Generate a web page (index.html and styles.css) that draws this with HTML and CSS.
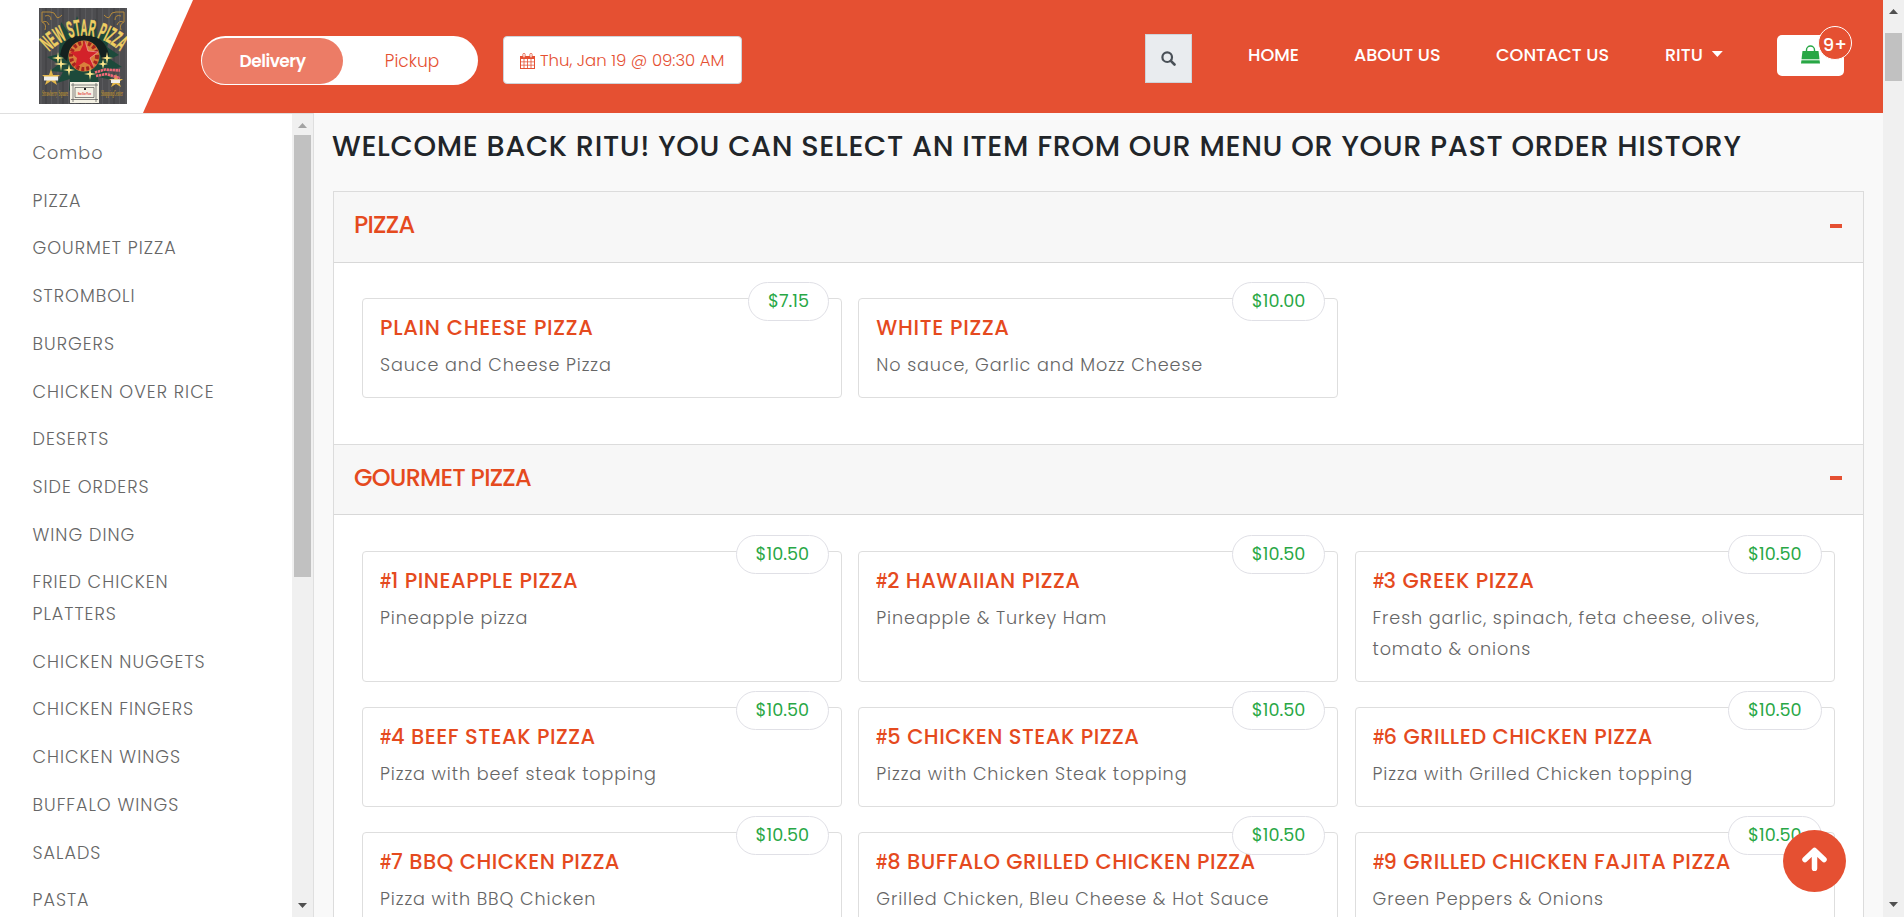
FILE: index.html
```html
<!DOCTYPE html>
<html lang="en">
<head>
<meta charset="utf-8">
<title>New Star Pizza</title>
<link rel="stylesheet" href="styles.css">
</head>
<body>
<div class="app">
  <div class="page">
    <header class="header">
      <div class="brand">
        <svg class="logo" viewBox="0 0 88 96" preserveAspectRatio="none">
          <defs>
            <pattern id="wood" width="17" height="96" patternUnits="userSpaceOnUse">
              <rect width="17" height="96" fill="#4d4d50"/>
              <rect x="1" width="2" height="96" fill="#565659"/>
              <rect x="6" width="2" height="96" fill="#454548"/>
              <rect x="12" width="1" height="96" fill="#5a5a5d"/>
            </pattern>
            <path id="arc" d="M10 44Q45 10 84 46"/>
          </defs>
          <rect width="88" height="96" fill="url(#wood)"/>
          <g fill="none" stroke="#b58a3c" stroke-width="1">
            <path d="M3 4h8q5 0 6 4t6-1M3 4v10q5 2 3 8M6 8q6-2 6 4M4 14q4-2 6 3"/>
            <path d="M85 4h-8q-5 0-6 4t-6-1M85 4v10q-5 2-3 8M82 8q-6-2-6 4M84 14q-4-2-6 3"/>
          </g>
          <path d="M22 14l10 14 6-20 7 18 12-15 1 18 16-10-6 20 12 8-9 4 12 8-16 3 6 10-14-3 1 10-9-6-6 11-6-10-9 9 1-12-13 4 6-11-13-1 9-7-12-7 12-3z" fill="#1d4a3b"/>
          <path d="M21 47q3-20 24-20t25 20l-7 6q-3-17-18-17T28 53z" fill="#14211f"/>
          <circle cx="45" cy="48" r="15.500" fill="#d9803c"/>
          <circle cx="45" cy="48" r="13" fill="none" stroke="#a9231f" stroke-width="4" stroke-dasharray="3 2"/>
          <path d="M46 33l3 10 10 1-8 6 4 9-10-5-9 6 2-10-7-6 10-1z" fill="#d3222a"/>
          <path d="M46 33l3 10 10 1-8 6 4 9" fill="none" stroke="#f0a0a0" stroke-width=".7"/>
          <text class="logo-arc"><textPath href="#arc" textLength="80" lengthAdjust="spacingAndGlyphs">NEW STAR PIZZA</textPath></text>
          <path fill="#ffe98c" d="M19 44l1 5 5 1-5 1-1 5-1-5-5-1 5-1zM22 49l1 6 6 1-6 1-1 6-1-6-6-1 6-1zM30 56l1 5 5 1-5 1-1 5-1-5-5-1 5-1zM51 60l1 5 5 1-5 1-1 5-1-5-5-1 5-1zM68 44l1 5 5 1-5 1-1 5-1-5-5-1 5-1zM64 51l1 4 4 1-4 1-1 4-1-4-4-1 4-1z"/>
          <path d="M12 61l2 6h7l-5 4 2 6-6-4-6 4 2-6-5-4h7z" fill="#e2b64a"/>
          <path d="M77 66l2 5h5l-4 3 2 5-5-3-5 3 2-5-4-3h5z" fill="#e2b64a"/>
          <rect x="5" y="68.500" width="14" height="4" fill="#eee"/>
          <rect x="72" y="71.500" width="9" height="3.500" fill="#eee"/>
          <path d="M56 64.500l10-3 15 1M57 68l10-2 14 4" fill="none" stroke="#f06a78" stroke-width="2.600" stroke-dasharray="2.400 .6"/>
          <text class="logo-place" x="3" y="87.500" textLength="26" lengthAdjust="spacingAndGlyphs">Strawberry Square</text>
          <text class="logo-place" x="62" y="87.500" textLength="22" lengthAdjust="spacingAndGlyphs">ShoppingCenter</text>
          <rect x="31" y="74" width="29" height="21" fill="#f4f1e4"/>
          <path d="M34 75v19M57 75v19M32 77h27M32 91.500h27M36 79.500h19v10H36z" fill="none" stroke="#555" stroke-width=".7"/>
          <rect x="45" y="80" width="2" height="2" fill="#222"/>
          <text class="logo-card" x="39" y="87" textLength="13" lengthAdjust="spacingAndGlyphs">New Star Pizza</text>
        </svg>
      </div>
      <div class="bar">
        <div class="toggle"><span class="toggle-on">Delivery</span><span class="toggle-off">Pickup</span></div>
        <div class="date">
          <svg class="cal" viewBox="0 0 15 16"><path d="M0 3h15v13H0z" fill="#e55032"/><path d="M1 6h2.600v2.400H1zM4.400 6h2.700v2.400H4.400zM7.900 6h2.700v2.400H7.900zM11.400 6H14v2.400h-2.600zM1 9.200h2.600v2.600H1zM4.400 9.200h2.700v2.600H4.400zM7.900 9.200h2.700v2.600H7.900zM11.400 9.200H14v2.600h-2.600zM1 12.600h2.600V15H1zM4.400 12.600h2.700V15H4.400zM7.900 12.600h2.700V15H7.900zM11.400 12.600H14V15h-2.600z" fill="#fff"/><rect x="2.900" y=".4" width="2.200" height="4" rx="1" fill="#fff" stroke="#e55032" stroke-width=".8"/><rect x="9.900" y=".4" width="2.200" height="4" rx="1" fill="#fff" stroke="#e55032" stroke-width=".8"/></svg>
          <span class="date-text">Thu, Jan 19 @ 09:30 AM</span>
        </div>
        <button class="search"><svg viewBox="0 0 15 15" width="15" height="15"><circle cx="6.200" cy="6.200" r="4.800" fill="none" stroke="#495057" stroke-width="2.200"/><path d="M9.800 9.800l3.700 3.700" stroke="#495057" stroke-width="2.600" stroke-linecap="round"/></svg></button>
        <nav class="nav">
          <a class="nav-home">HOME</a><a class="nav-about">ABOUT US</a><a class="nav-contact">CONTACT US</a><a class="nav-user">RITU<i class="caret"></i></a>
        </nav>
        <div class="cart">
          <svg class="bag" viewBox="0 0 19 19"><path d="M1.500 6h16L19 18.500H0z" fill="#28a745"/><path d="M5.500 8V5a4 4 0 0 1 8 0v3" fill="none" stroke="#28a745" stroke-width="1.400"/><path d="M0 14.800h19" stroke="#fff" stroke-width="1"/></svg>
          <span class="badge">9+</span>
        </div>
      </div>
    </header>
    <div class="body">
      <aside class="side">
        <ul class="cats">
          <li>Combo</li><li>PIZZA</li><li>GOURMET PIZZA</li><li>STROMBOLI</li><li>BURGERS</li><li>CHICKEN OVER RICE</li><li>DESERTS</li><li>SIDE ORDERS</li><li>WING DING</li><li>FRIED CHICKEN PLATTERS</li><li>CHICKEN NUGGETS</li><li>CHICKEN FINGERS</li><li>CHICKEN WINGS</li><li>BUFFALO WINGS</li><li>SALADS</li><li>PASTA</li>
        </ul>
        <div class="scroll scroll-side"><i class="up"></i><i class="thumb"></i><i class="down"></i></div>
      </aside>
      <main class="main">
        <h1 class="welcome">WELCOME BACK RITU! YOU CAN SELECT AN ITEM FROM OUR MENU OR YOUR PAST ORDER HISTORY</h1>
        <div class="panel">
          <h2 class="sec"><span>PIZZA</span><i class="minus"></i></h2>
          <div class="grid grid-first">
            <article class="card"><b class="price">$7.15</b><h3>PLAIN CHEESE PIZZA</h3><p>Sauce and Cheese Pizza</p></article>
            <article class="card"><b class="price">$10.00</b><h3>WHITE PIZZA</h3><p>No sauce, Garlic and Mozz Cheese</p></article>
          </div>
          <h2 class="sec sec-next"><span>GOURMET PIZZA</span><i class="minus"></i></h2>
          <div class="grid grid-next">
            <article class="card"><b class="price">$10.50</b><h3><span class="hash">#</span>1 PINEAPPLE PIZZA</h3><p>Pineapple pizza</p></article>
            <article class="card"><b class="price">$10.50</b><h3><span class="hash">#</span>2 HAWAIIAN PIZZA</h3><p>Pineapple &amp; Turkey Ham</p></article>
            <article class="card"><b class="price">$10.50</b><h3><span class="hash">#</span>3 GREEK PIZZA</h3><p>Fresh garlic, spinach, feta cheese, olives, tomato &amp; onions</p></article>
            <article class="card"><b class="price">$10.50</b><h3><span class="hash">#</span>4 BEEF STEAK PIZZA</h3><p>Pizza with beef steak topping</p></article>
            <article class="card"><b class="price">$10.50</b><h3><span class="hash">#</span>5 CHICKEN STEAK PIZZA</h3><p>Pizza with Chicken Steak topping</p></article>
            <article class="card"><b class="price">$10.50</b><h3><span class="hash">#</span>6 GRILLED CHICKEN PIZZA</h3><p>Pizza with Grilled Chicken topping</p></article>
            <article class="card"><b class="price">$10.50</b><h3><span class="hash">#</span>7 BBQ CHICKEN PIZZA</h3><p>Pizza with BBQ Chicken</p></article>
            <article class="card"><b class="price">$10.50</b><h3><span class="hash">#</span>8 BUFFALO GRILLED CHICKEN PIZZA</h3><p>Grilled Chicken, Bleu Cheese &amp; Hot Sauce</p></article>
            <article class="card"><b class="price">$10.50</b><h3><span class="hash">#</span>9 GRILLED CHICKEN FAJITA PIZZA</h3><p>Green Peppers &amp; Onions</p></article>
          </div>
        </div>
      </main>
    </div>
  </div>
  <div class="scroll scroll-page"><i class="up"></i><i class="thumb"></i><i class="down"></i></div>
  <button class="top"><svg viewBox="0 0 25 24" width="25" height="24"><path d="M3 12.500L12.500 3.500l9.500 9M12.500 5v16.500" fill="none" stroke="#fff" stroke-width="5.500" stroke-linecap="round" stroke-linejoin="round"/></svg></button>
</div>
</body>
</html>
```
FILE: styles.css
```css
* { box-sizing: border-box; }
body { margin: 0; font-family: Poppins, Inter, "Open Sans", sans-serif; color: #212529; overflow: hidden; }
h1, h2, h3, p, ul { margin: 0; padding: 0; }
.app { display: flex; width: 1904px; height: 917px; overflow: hidden; position: relative; }
.page { width: 1883px; height: 917px; display: flex; flex-direction: column; }

.header { height: 113px; flex: none; display: flex; background: #fff; }
.brand { width: 143px; flex: none; padding: 8px 0 0 39px; }
.logo { width: 88px; height: 96px; display: block; }
.logo-arc { font: 700 23px "Liberation Sans Narrow", "Liberation Sans", sans-serif; fill: #efcf62; stroke: #efcf62; stroke-width: .5px; }
.logo-place { font: 700 9px "Liberation Serif", serif; fill: #b08a35; }
.logo-card { font: 700 3.500px "Liberation Sans", sans-serif; fill: #d22; }
.bar { flex: 1; display: flex; align-items: flex-start; background: #e55032; clip-path: polygon(50px 0, 100% 0, 100% 100%, 0 100%); padding-left: 58px; }

.toggle { margin-top: 36px; width: 277px; height: 49px; border-radius: 25px; background: #fff; display: flex; padding: 2px 1px 1px; font-size: 17px; line-height: 46px; }
.toggle span { flex: none; text-align: center; }
.toggle-on { width: 141px; border-radius: 23px; background: #ec7c66; color: #fff; font-weight: 600; letter-spacing: -.5px; }
.toggle-off { width: 134px; padding-left: 4px; color: #e55032; font-weight: 300; }
.date { margin: 36px 0 0 25px; width: 239px; height: 48px; background: #fff; border: 1px solid #ced4da; border-radius: 4px; display: flex; align-items: center; padding: 0 0 0 16px; color: #e55032; font-size: 16.500px; font-weight: 300; white-space: nowrap; }
.cal { width: 15px; height: 16px; margin: 1px 5px 0 0; }
.search { margin: 34px 0 0 403px; width: 47px; height: 49px; border: 1px solid #ced4da; background: #e9ecef; display: flex; align-items: center; justify-content: center; padding: 0; }
.nav { margin: 44px 0 0 56px; display: flex; color: #fff; font-size: 17.600px; font-weight: 500; line-height: 22px; white-space: nowrap; }
.nav-home { width: 106px; }
.nav-about { width: 142px; }
.nav-contact { width: 169px; }
.nav-user { width: 112px; display: flex; }
.caret { margin: 7px 0 0 9px; width: 11px; height: 6px; background: #fff; clip-path: polygon(0 0, 100% 0, 50% 100%); }
.cart { margin-top: 35px; width: 67px; height: 41px; background: #fff; border-radius: 5px; position: relative; padding: 10px 0 0 24px; }
.bag { width: 19px; height: 19px; display: block; }
.badge { position: absolute; left: 41px; top: -9px; width: 34px; height: 34px; border: 1px solid #fff; border-radius: 50%; background: #e55032; color: #fff; font-size: 18px; font-weight: 500; line-height: 35px; text-align: center; }

.body { flex: 1; display: flex; min-height: 0; }
.side { width: 314px; flex: none; display: flex; background: #fff; border-top: 1px solid #dfdfdf; border-right: 1px solid #dfdfdf; overflow: hidden; }
.cats { width: 292px; list-style: none; padding: 16px 55px 0 32.500px; font-size: 17.600px; font-weight: 300; color: #666; letter-spacing: 1px; }
.cats li { padding: 8px 0; line-height: 31.700px; }

.scroll { width: 21px; flex: none; background: #f0f0f0; display: flex; flex-direction: column; align-items: center; }
.scroll .thumb { width: 17px; background: #c1c1c1; }
.scroll .up, .scroll .down { width: 9px; height: 5px; background: #505050; }
.up { clip-path: polygon(50% 0, 100% 100%, 0 100%); }
.down { clip-path: polygon(0 0, 100% 0, 50% 100%); }
.scroll-side .up { margin-top: 9px; background: #a3a3a3; }
.scroll-side .thumb { margin-top: 7px; height: 442px; }
.scroll-side .down { margin-top: 326px; }
.scroll-page .up { margin-top: 9px; }
.scroll-page .thumb { margin-top: 19px; height: 48px; }
.scroll-page .down { margin-top: 821px; }

.main { flex: 1; background: #f9f9f9; padding: 15px 19px 0; overflow: hidden; }
.welcome { font-size: 28.800px; font-weight: 500; line-height: 36px; letter-spacing: .63px; white-space: nowrap; margin-left: -1px; }
.panel { margin-top: 27px; border: 1px solid #dcdcdc; background: #fff; width: 1531px; }
.sec { height: 71px; background: #f7f7f7; border-bottom: 1px solid #d8d8d8; padding: 0 21px 0 20px; display: flex; justify-content: space-between; font-size: 24px; font-weight: 500; letter-spacing: -.75px; line-height: 66px; color: #e54a1e; }
.sec-next { border-top: 1px solid #dcdcdc; }
.minus { width: 12px; height: 4px; margin-top: 32px; background: #e55032; }
.sec-next .minus { margin-top: 31px; }
.grid { display: grid; grid-template-columns: repeat(3, 480px); column-gap: 16.250px; row-gap: 25px; padding: 35px 28px; }
.grid-first { height: 181px; align-items: start; }
.grid-next { padding-top: 36px; }
.card { border: 1px solid #dedede; border-radius: 4px; position: relative; padding: 12.500px 17px 16.500px; background: #fff; min-height: 100px; }
.card h3 { font-size: 21px; font-weight: 500; line-height: 32px; letter-spacing: .7px; color: #e54a1e; white-space: nowrap; }
.grid-next h3 { letter-spacing: .5px; }
.hash { display: inline-block; width: 11px; font-size: 19px; line-height: 19px; letter-spacing: 0; transform: scaleX(.7); transform-origin: left; }
.card p { font-size: 17.600px; font-weight: 300; line-height: 31px; padding-top: 6px; color: #666; letter-spacing: .9px; }
.price { position: absolute; right: 12px; top: -17px; height: 39px; padding: 0 19px; border: 1px solid #e0e0e6; border-radius: 20px; background: #fff; color: #28a745; font-size: 17.600px; font-weight: 400; line-height: 37px; }

.top { position: absolute; left: 1783px; top: 830px; width: 63px; height: 62px; border: 0; border-radius: 50%; background: #e55032; display: flex; align-items: center; justify-content: center; padding: 0 0 4px; }
```
